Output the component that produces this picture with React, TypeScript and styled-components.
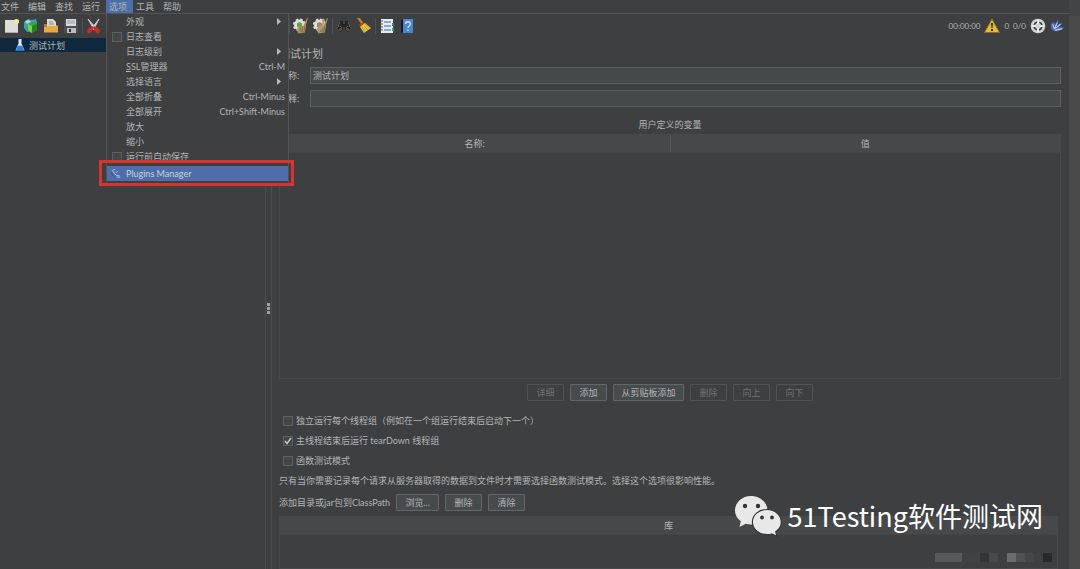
import React from "react";
import styled, { createGlobalStyle } from "styled-components";

const c = {
  bg: "#3d3f41",
  line: "#515355",
  field: "#45494a",
  fieldLine: "#5c5f60",
  header: "#47484a",
  text: "#b4b5b6",
  muted: "#6f7173",
  blue: "#4e6ea9",
};

const Global = createGlobalStyle`
  * { box-sizing: border-box; }
  body {
    margin: 0;
    background: ${c.bg};
    color: ${c.text};
    font: 9px/15px Lato, "Noto Sans CJK SC", sans-serif;
  }
  button, input { font: inherit; color: inherit; }
  svg { display: block; flex: none; }
`;

const Page = styled.div`
  display: flex;
  min-height: 100vh;
  overflow: hidden;
`;
const Window = styled.div`
  flex: 1;
  min-width: 0;
  display: flex;
  flex-direction: column;
`;
const Gutter = styled.div`
  width: 11px;
  background: #4a4a4b;
  border-top: 16px solid #434445;
`;

const MenuBar = styled.nav`
  display: flex;
  height: 14px;
  margin-left: -2px;
  border-bottom: 1px solid ${c.line};
`;
const MenuSlot = styled.div`
  position: relative;
  width: 27px;
`;
const MenuTitle = styled.button<{ $open?: boolean }>`
  display: block;
  width: 27px;
  height: 13px;
  padding: 0 0 0 3px;
  border: 0;
  text-align: left;
  line-height: 12px;
  white-space: nowrap;
  background: ${(p) => (p.$open ? c.blue : "transparent")};
`;

const Popup = styled.div`
  position: absolute;
  z-index: 2;
  top: 13px;
  left: 0;
  width: 183px;
  padding-bottom: 2px;
  background: ${c.bg};
  border: 1px solid ${c.line};
`;
const Item = styled.button`
  display: flex;
  align-items: center;
  width: 100%;
  height: 15px;
  padding: 0 3px 0 19px;
  border: 0;
  background: none;
  text-align: left;
  white-space: nowrap;
`;
const CheckItem = styled.label`
  display: flex;
  align-items: center;
  gap: 4px;
  height: 15px;
  padding-left: 5px;
`;
const ItemText = styled.span`
  flex: 1;
`;
const Mnemonic = styled.span`
  text-decoration: underline;
`;
const PluginItem = styled(Item)`
  position: relative;
  margin-top: 2px;
  padding-left: 4px;
  gap: 5px;
  background: ${c.blue};
  color: #c9ced8;
`;
const Highlight = styled.span`
  position: absolute;
  inset: -6px -6px -5px -8px;
  border: 3px solid #d93330;
`;

const Check = styled.input`
  appearance: none;
  flex: none;
  width: 10px;
  height: 10px;
  margin: 0;
  border: 1px solid ${c.fieldLine};
  background: #43474a;
`;
const CheckWrap = styled.span`
  position: relative;
  display: flex;
  svg {
    position: absolute;
    inset: 0;
    pointer-events: none;
  }
`;

const ToolBar = styled.div`
  display: flex;
  align-items: center;
  justify-content: space-between;
  height: 24px;
  padding: 0 5px 0 3px;
`;
const Tools = styled.div`
  display: flex;
  align-items: center;
  gap: 4px;
`;
const ToolGroup = styled(Tools)`
  margin-left: 184px;
`;
const Tool = styled.button`
  padding: 0;
  border: 0;
  background: none;
`;
const Sep = styled.span`
  width: 1px;
  height: 16px;
  margin: 0 -1px;
  background: #4d4f51;
`;
const Count = styled.span`
  white-space: nowrap;
  font-size: 8px;
`;

const Body = styled.div`
  flex: 1;
  display: flex;
`;
const Tree = styled.aside`
  width: 265px;
`;
const TreeRow = styled.div`
  display: flex;
  align-items: center;
  gap: 3px;
  height: 14px;
  padding-left: 14px;
  background: #10283d;
`;
const Splitter = styled.div`
  display: flex;
  flex-direction: column;
  align-items: center;
  gap: 1px;
  width: 7px;
  padding-top: 265px;
  border: solid #4b4d4f;
  border-width: 0 1px;
`;
const Dot = styled.i`
  width: 3px;
  height: 3px;
  background: #a0a1a2;
`;
const Main = styled.main`
  flex: 1;
  min-width: 0;
  display: flex;
  flex-direction: column;
  padding: 0 8px 0 7px;
`;
const Title = styled.h1`
  margin: 7px 0 4px;
  font-size: 11px;
  font-weight: 400;
  line-height: 18px;
`;
const Field = styled.label`
  display: flex;
  align-items: center;
  height: 17px;
  margin-bottom: 6px;
`;
const FieldName = styled.span`
  width: 31px;
`;
const TextInput = styled.input`
  flex: 1;
  min-width: 0;
  height: 17px;
  padding: 0 2px;
  border: 1px solid ${c.fieldLine};
  background: ${c.field};
`;
const Caption = styled.h2`
  margin: 4px 0 2px;
  font-size: 9px;
  font-weight: 400;
  line-height: 15px;
  text-align: center;
`;
const TableBox = styled.div<{ $grow?: boolean }>`
  ${(p) => (p.$grow ? "flex: 1; min-height: 53px; margin-right: 3px;" : "height: 245px;")}
  border: 1px solid #48494b;
`;
const Table = styled.table`
  width: 100%;
  border-collapse: collapse;
  table-layout: fixed;
`;
const Th = styled.th`
  height: 17px;
  padding: 0;
  font-weight: 400;
  background: ${c.header};
  border-bottom: 1px solid #424446;
  & + & {
    border-left: 1px solid #56585a;
  }
`;
const Buttons = styled.div`
  display: flex;
  justify-content: center;
  gap: 6px;
  margin: 5px 0 12px;
`;
const Btn = styled.button<{ $w: number }>`
  width: ${(p) => p.$w}px;
  height: 17px;
  padding: 0;
  line-height: 13px;
  white-space: nowrap;
  border: 1px solid #626668;
  border-radius: 1px;
  background: #464b4c;
  &:disabled {
    color: ${c.muted};
    border-color: #505254;
    background: none;
  }
`;
const Option = styled.label`
  display: flex;
  align-items: center;
  gap: 3px;
  height: 15px;
  margin-bottom: 5px;
  padding-left: 4px;
  white-space: nowrap;
`;
const Note = styled.p`
  margin: 0 0 6px;
  white-space: nowrap;
`;
const PathRow = styled.div`
  display: flex;
  align-items: center;
  gap: 6px;
  margin-bottom: 5px;
`;

const Watermark = styled.div`
  position: absolute;
  right: 37px;
  bottom: 31px;
  display: flex;
  align-items: center;
  gap: 6px;
  color: #fff;
  font: 27px/44px "Noto Sans CJK SC", sans-serif;
`;
const Mosaic = styled.div`
  position: absolute;
  right: 28px;
  bottom: 7px;
  display: flex;
`;
const Cell = styled.i<{ $w: number; $c: string }>`
  width: ${(p) => p.$w}px;
  height: 9px;
  background: ${(p) => p.$c};
`;

const Icon = ({ children, s = 16 }: { children: React.ReactNode; s?: number }) => (
  <svg width={s} height={s} viewBox="0 0 16 16" aria-hidden="true">
    {children}
  </svg>
);

const NewIcon = () => (
  <Icon>
    <path d="M2 2h13v13H2z" fill="#deded8" />
    <path d="M2 14h13v1H2z" fill="#aaa" />
    <circle cx="13.5" cy="3.5" r="2.6" fill="#eceb9a" />
  </Icon>
);
const TemplateIcon = () => (
  <Icon>
    <path d="M1 4l4-3 4 1 4-1 1 4-3 8-7 1-3-4z" fill="#3e9db5" />
    <path d="M2 3l4-1 2 2-4 2z" fill="#a9dbe4" />
    <path d="M5 6l5-2 4 2v6l-6 3-4-3z" fill="#36a92c" />
    <path d="M5 6l4 2v7l-4-3z" fill="#79cf4e" />
    <path d="M9 8l5-2v6l-5 3z" fill="#23851f" />
  </Icon>
);
const OpenIcon = () => (
  <Icon>
    <path d="M4 1h6l3 3v6H4z" fill="#dad9d5" />
    <path d="M6 4h4M6 6h5" stroke="#8b8b89" />
    <path d="M1 6h3v3h9V7h2v7H1z" fill="#b27c23" />
    <path d="M1 9h3l1-1h10v6.500H1z" fill="#e6aa45" />
  </Icon>
);
const SaveIcon = () => (
  <Icon>
    <path d="M2 1h12l1 1v13H1V2z" fill="#4b4d50" />
    <path d="M3 1h10v7H3z" fill="#d8dadc" />
    <path d="M4 3h8M4 5h8" stroke="#9a9da0" />
    <path d="M4 10h9v5H4z" fill="#babcbe" />
    <path d="M6 11h2v3H6z" fill="#303234" />
  </Icon>
);
const CutIcon = () => (
  <Icon>
    <path d="M2 1l8 9-2 1.500zM13 1L6 10l1.500 1.500z" fill="#dcdddd" stroke="#ccc" strokeWidth="1" />
    <path d="M7 9l-2 1c-2 0-3 2-3 3.500s2 1.500 3 0L7 10M8 9l2 1c2 0 3 2 3 3.500s-2 1.500-3 0L8 10" fill="#cc2d28" stroke="#cc2d28" strokeWidth="1.500" />
  </Icon>
);
const SweepIcon = ({ all }: { all?: boolean }) => (
  <Icon>
    <circle cx="6.500" cy="7" r="4" fill="none" stroke="#dededa" strokeWidth="3" />
    <circle cx="6.500" cy="7" r="5.800" fill="none" stroke="#dededa" strokeWidth="1.600" strokeDasharray="2.600 1.950" />
    <circle cx="6.500" cy="7" r="2.500" fill={all ? "#a18a62" : "#62a83b"} />
    <path d="M14 0l1 .6-2 6-1 8-7 1-1-5 4-2 2 0z" fill="#a98e65" />
    <path d="M7 9l1 5M9.500 8l0 6M12 7l-1 7" stroke="#7c6542" strokeWidth=".7" />
    {all && <path d="M10 0l-1 7-5 3 1 4 4-3 3-9z" fill="#b59a70" />}
  </Icon>
);
const SearchIcon = () => (
  <Icon>
    <path d="M4 3h3v3h2V3h3l3 6v3l-3 2-3-2V9H7v3l-3 2-3-2V9z" fill="#222426" />
    <circle cx="3.500" cy="10.500" r="2.300" fill="#191a1b" stroke="#5f5b57" />
    <circle cx="12.500" cy="10.500" r="2.300" fill="#191a1b" stroke="#5f5b57" />
    <path d="M3 11h2M11 11h2" stroke="#b66a35" />
    <path d="M4 4l-2 4M12 4l2 4" stroke="#5e6468" />
  </Icon>
);
const BroomIcon = () => (
  <Icon>
    <path d="M1 0h3l4 6-2 1z" fill="#c78123" />
    <path d="M3 7l4-3 3 2-4 4z" fill="#c43c21" />
    <path d="M4 9l5-4 6 5-7 5z" fill="#e7c43c" />
    <path d="M6 9l3 5M8 8l4 4M9 6l5 4" stroke="#b38c1f" strokeWidth=".7" />
  </Icon>
);
const LogIcon = () => (
  <Icon>
    <path d="M2 1h12v14H2z" fill="#e9ecef" />
    <path d="M5 4h7M5 8h7M5 12h7" stroke="#2f6fa6" strokeWidth="1.200" />
    <path d="M1 3h3M1 6h3M1 9h3M1 12h3" stroke="#4d5358" />
    <path d="M14 5v3" stroke="#3a78bd" strokeWidth="2" />
    <path d="M14 10v3" stroke="#36a14a" strokeWidth="2" />
  </Icon>
);
const HelpIcon = () => (
  <Icon>
    <path d="M2 2l2-1v13l-2 1z" fill="#15181c" />
    <path d="M4 1h10v14H4z" fill="#4787ce" />
    <path d="M6.500 6c0-3 5-3 5 0 0 2-2.500 1.700-2.500 4M9 11.500v1.500" fill="none" stroke="#cfe0f3" strokeWidth="1.300" />
  </Icon>
);
const WarnIcon = () => (
  <Icon>
    <path d="M8 1l7.500 13.500H.5z" fill="#e5bd35" stroke="#86701f" />
    <path d="M7 5h2l-.5 5h-1zM7 11h2v2H7z" fill="#2e2a1a" />
  </Icon>
);
const TargetIcon = () => (
  <Icon>
    <circle cx="8" cy="8" r="7.300" fill="#d3d3d3" />
    <circle cx="8" cy="8" r="4" fill="none" stroke="#3b3d3f" strokeWidth="1.600" strokeDasharray="4.200 2.083" strokeDashoffset="-1.040" />
    <path d="M8 2v4M8 10v4M2 8h4M10 8h4" stroke="#f2f2f2" strokeWidth="1.500" />
  </Icon>
);
const FeatherIcon = () => (
  <Icon s={14}>
    <path d="M1 8C1 5 2 4 5 3l0 3 4-5 1 1-2 5 5-3 1 1-4 4 6 0-2 3c-4 2-8 3-11 1-2-2-2-3-2-5z" fill="#4b66b4" />
    <path d="M3 6l2 5 3.500-7M6 11l6-5" fill="none" stroke="#bccaf0" strokeWidth="1.200" />
    <path d="M6 13l8-2" fill="none" stroke="#c3cde6" strokeWidth="1.400" />
  </Icon>
);
const SparkIcon = () => (
  <Icon s={10}>
    <path d="M2 3c0-2 3-2 5-2M3 3c1 3 3 5 5 7l6 1M7 7l4-4M9 13h6" fill="none" stroke="#b9c6ec" strokeWidth="1.400" />
    <path d="M1 5c0 4 2 7 6 9" fill="none" stroke="#3555ae" strokeWidth="1.600" />
  </Icon>
);
const FlaskIcon = () => (
  <Icon s={12}>
    <path d="M6 0h4v6l4 9H2l4-9z" fill="#dbe6f2" />
    <path d="M5 9h6l3 6.500H2z" fill="#2f7fd8" />
  </Icon>
);
const ArrowSvg = styled.svg`
  margin-right: 4px;
`;
const Arrow = () => (
  <ArrowSvg width="5" height="7" viewBox="0 0 5 7" aria-hidden="true">
    <path d="M1 0l4 3.500L1 7z" fill="#b9babb" />
  </ArrowSvg>
);
const WeChat = () => (
  <svg width="48" height="42" viewBox="0 0 48 42" aria-hidden="true">
    <path d="M17 1C8 1 1 7.500 1 15.500c0 4.500 2.200 8 5.800 10.700L5.500 32l6.200-3.300c1.700.5 3.400.8 5.300.8 9 0 16.500-6 16.500-14S26 1 17 1z" fill="#e8e8e8" />
    <path d="M33 14.500c-8.300 0-14.600 5.500-14.600 12.500S24.700 39.700 33 39.700c1.700 0 3.300-.2 4.800-.7l5.200 2.500-1.300-4.700c3.400-2.300 5.600-5.700 5.600-9.600 0-7-6-12.700-14.300-12.700z" fill="#e8e8e8" stroke="#343536" strokeWidth="1.200" />
    <g fill="#333536">
      <circle cx="11" cy="11" r="2.200" />
      <circle cx="24" cy="11" r="2.200" />
      <circle cx="28" cy="22.500" r="1.900" />
      <circle cx="38" cy="22.500" r="1.900" />
    </g>
  </svg>
);

const Tick = ({ id, on }: { id: string; on?: boolean }) => (
  <CheckWrap>
    <Check type="checkbox" id={id} defaultChecked={on} />
    {on && (
      <svg width="10" height="10" viewBox="0 0 10 10" aria-hidden="true">
        <path d="M2 5l2 2.500L8 2" fill="none" stroke="#c4c5c6" strokeWidth="1.400" />
      </svg>
    )}
  </CheckWrap>
);

const OptionsMenu = () => (
  <Popup>
    <Item><ItemText>外观</ItemText><Arrow /></Item>
    <CheckItem htmlFor="log"><Tick id="log" />日志查看</CheckItem>
    <Item><ItemText>日志级别</ItemText><Arrow /></Item>
    <Item><ItemText><Mnemonic>S</Mnemonic>SL管理器</ItemText>Ctrl-M</Item>
    <Item><ItemText>选择语言</ItemText><Arrow /></Item>
    <Item><ItemText>全部折叠</ItemText>Ctrl-Minus</Item>
    <Item><ItemText>全部展开</ItemText>Ctrl+Shift-Minus</Item>
    <Item>放大</Item>
    <Item>缩小</Item>
    <CheckItem htmlFor="autosave"><Tick id="autosave" />运行前自动保存</CheckItem>
    <PluginItem><SparkIcon />Plugins Manager<Highlight /></PluginItem>
  </Popup>
);

const menus = ["文件", "编辑", "查找", "运行", "选项", "工具", "帮助"];
const actions: [string, number, boolean][] = [
  ["详细", 37, false],
  ["添加", 37, true],
  ["从剪贴板添加", 71, true],
  ["删除", 37, false],
  ["向上", 37, false],
  ["向下", 37, false],
];
const options: [string, boolean][] = [
  ["独立运行每个线程组（例如在一个组运行结束后启动下一个）", false],
  ["主线程结束后运行 tearDown 线程组", true],
  ["函数测试模式", false],
];
const cells: [number, string][] = [
  [27, "#58595b"], [18, "#404143"], [9, "#343537"], [9, "#48494b"], [9, "#3d3f41"],
  [9, "#6b6c6e"], [9, "#505153"], [9, "#454648"], [9, "#3f4042"], [9, "#28292b"],
];

export default function App() {
  return (
    <>
      <Global />
      <Page>
        <Window>
          <MenuBar>
            {menus.map((m) => (
              <MenuSlot key={m}>
                <MenuTitle $open={m === "选项"}>{m}</MenuTitle>
                {m === "选项" && <OptionsMenu />}
              </MenuSlot>
            ))}
          </MenuBar>
          <ToolBar>
            <Tools>
              <Tool aria-label="新建"><NewIcon /></Tool>
              <Tool aria-label="模板"><TemplateIcon /></Tool>
              <Tool aria-label="打开"><OpenIcon /></Tool>
              <Tool aria-label="保存"><SaveIcon /></Tool>
              <Sep />
              <Tool aria-label="剪切"><CutIcon /></Tool>
              <ToolGroup>
                <Sep />
                <Tool aria-label="清除"><SweepIcon /></Tool>
                <Tool aria-label="清除全部"><SweepIcon all /></Tool>
                <Sep />
                <Tool aria-label="查找"><SearchIcon /></Tool>
                <Tool aria-label="重置查找"><BroomIcon /></Tool>
                <Sep />
                <Tool aria-label="函数助手"><LogIcon /></Tool>
                <Tool aria-label="帮助"><HelpIcon /></Tool>
              </ToolGroup>
            </Tools>
            <Tools>
              <Count>00:00:00</Count>
              <WarnIcon />
              <Count>0</Count>
              <Count>0/0</Count>
              <TargetIcon />
              <FeatherIcon />
            </Tools>
          </ToolBar>
          <Body>
            <Tree>
              <TreeRow><FlaskIcon />测试计划</TreeRow>
            </Tree>
            <Splitter><Dot /><Dot /><Dot /></Splitter>
            <Main>
              <Title>测试计划</Title>
              <Field><FieldName>名称:</FieldName><TextInput defaultValue="测试计划" /></Field>
              <Field><FieldName>注释:</FieldName><TextInput /></Field>
              <Caption>用户定义的变量</Caption>
              <TableBox>
                <Table>
                  <thead><tr><Th>名称:</Th><Th>值</Th></tr></thead>
                </Table>
              </TableBox>
              <Buttons>
                {actions.map(([t, w, on]) => (
                  <Btn key={t} $w={w} disabled={!on}>{t}</Btn>
                ))}
              </Buttons>
              {options.map(([t, on], i) => (
                <Option key={t} htmlFor={`opt${i}`}><Tick id={`opt${i}`} on={on} />{t}</Option>
              ))}
              <Note>只有当你需要记录每个请求从服务器取得的数据到文件时才需要选择函数测试模式。选择这个选项很影响性能。</Note>
              <PathRow>
                添加目录或jar包到ClassPath
                <Btn $w={43}>浏览...</Btn>
                <Btn $w={37}>删除</Btn>
                <Btn $w={37}>清除</Btn>
              </PathRow>
              <TableBox $grow>
                <Table>
                  <thead><tr><Th>库</Th></tr></thead>
                </Table>
              </TableBox>
            </Main>
          </Body>
        </Window>
        <Gutter />
      </Page>
      <Watermark><WeChat />51Testing软件测试网</Watermark>
      <Mosaic>{cells.map(([w, col], i) => <Cell key={i} $w={w} $c={col} />)}</Mosaic>
    </>
  );
}
